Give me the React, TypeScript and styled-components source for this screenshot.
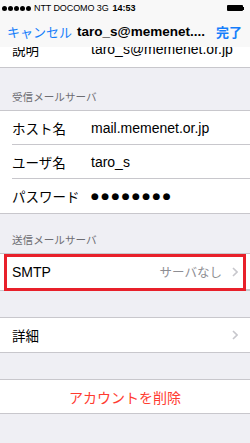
import React from "react";
import styled, { createGlobalStyle } from "styled-components";

const Global = createGlobalStyle`
  html, body { margin: 0; padding: 0; background: #efeff4; }
  body { font-family: "Liberation Sans", "Noto Sans CJK JP", sans-serif; -webkit-font-smoothing: antialiased; }
  * { box-sizing: border-box; }
`;

const Page = styled.div`
  position: relative;
  width: 250px;
  height: 443px;
  overflow: hidden;
  background: #efeff4;
`;

const Header = styled.div`
  position: absolute;
  top: 0;
  left: 0;
  right: 0;
  height: 47px;
  background: #f8f8f8;
  z-index: 2;
`;

const StatusBar = styled.div`
  height: 16px;
  display: grid;
  grid-template-columns: minmax(0, 1fr) auto minmax(0, 1fr);
  align-items: center;
  padding: 0 6px 0 2px;
  font-size: 9px;
  color: #000;
`;

const Carrier = styled.div`
  display: flex;
  align-items: center;
  gap: 3px;
  white-space: nowrap;
  letter-spacing: -0.1px;
`;

const Signal = styled.div`
  display: flex;
  gap: 1px;
`;

const Dot = styled.span`
  width: 5px;
  height: 5px;
  border-radius: 50%;
  background: #000;
`;

const Time = styled.div`
  font-weight: bold;
  padding-left: 2px;
`;

const BatteryWrap = styled.div`
  justify-self: end;
  display: flex;
  align-items: center;
`;

const BatteryBody = styled.div`
  width: 16px;
  height: 6px;
  border-radius: 1px;
  background: #000;
`;

const BatteryNub = styled.div`
  width: 1.5px;
  height: 3px;
  background: #000;
`;

const NavBar = styled.div`
  height: 31px;
  display: flex;
  align-items: center;
  padding: 0 8px 0 7px;
`;

const NavButton = styled.div<{ $bold?: boolean }>`
  color: #157efb;
  font-size: 13px;
  font-weight: ${(p) => (p.$bold ? "bold" : "normal")};
  white-space: nowrap;
`;

const NavTitle = styled.div`
  flex: 1;
  padding-left: 5px;
  font-size: 13.5px;
  font-weight: bold;
  color: #000;
  white-space: nowrap;
`;

const Content = styled.div`
  padding-top: 33px;
  display: flex;
  flex-direction: column;
`;

const Group = styled.div<{ $top?: boolean }>`
  position: relative;
  background: #fff;
  border-top: ${(p) => (p.$top === false ? "none" : "1px solid #c8c7cc")};
  border-bottom: 1px solid #c8c7cc;
`;

const SectionHeader = styled.div<{ $h: number }>`
  height: ${(p) => p.$h}px;
  display: flex;
  align-items: flex-end;
  padding: 0 12px 6px;
  font-size: 10.6px;
  line-height: 14px;
  color: #6d6d72;
`;

const Spacer = styled.div<{ $h: number }>`
  height: ${(p) => p.$h}px;
`;

const Row = styled.div<{ $h?: number }>`
  padding-left: 12px;
  height: ${(p) => p.$h ?? 34}px;
  &:not(:last-child) > div {
    border-bottom: 1px solid #c8c7cc;
  }
`;

const RowInner = styled.div<{ $center?: boolean; $lift?: number }>`
  height: 100%;
  display: flex;
  align-items: center;
  justify-content: ${(p) => (p.$center ? "center" : "flex-start")};
  padding-right: 12px;
  padding-bottom: ${(p) => p.$lift ?? 0}px;
  font-size: 14px;
  color: #000;
`;

const Label = styled.span`
  width: 79px;
  flex-shrink: 0;
  font-size: 13.5px;
  white-space: nowrap;
`;

const Value = styled.span`
  font-size: 14px;
  white-space: nowrap;
`;

const Dots = styled.span`
  font-family: "DejaVu Sans", sans-serif;
  font-size: 9px;
  letter-spacing: 2.4px;
`;

const Detail = styled.span`
  margin-left: auto;
  display: flex;
  align-items: center;
  gap: 10px;
  color: #8e8e93;
  font-size: 12.5px;
`;

const DangerText = styled.span`
  color: #ff3b30;
  font-size: 14px;
`;

const Highlight = styled.div`
  position: absolute;
  left: 4px;
  right: 4px;
  top: 0;
  height: 37px;
  border: 3px solid #e8202a;
  pointer-events: none;
`;

const Chevron = () => (
  <svg width="6" height="10" viewBox="0 0 6 10">
    <polyline points="1,1 5,5 1,9" fill="none" stroke="#c7c7cc" strokeWidth="1.6" />
  </svg>
);

export default function App() {
  return (
    <Page>
      <Global />
      <Header>
        <StatusBar>
          <Carrier>
            <Signal>
              {[0, 1, 2, 3, 4].map((i) => (
                <Dot key={i} />
              ))}
            </Signal>
            <span>NTT DOCOMO 3G</span>
          </Carrier>
          <Time>14:53</Time>
          <BatteryWrap>
            <BatteryBody />
            <BatteryNub />
          </BatteryWrap>
        </StatusBar>
        <NavBar>
          <NavButton>キャンセル</NavButton>
          <NavTitle>taro_s@memenet....</NavTitle>
          <NavButton $bold>完了</NavButton>
        </NavBar>
      </Header>
      <Content>
        <Group $top={false}>
          <Row>
            <RowInner $lift={3}>
              <Label>説明</Label>
              <Value>taro_s@memenet.or.jp</Value>
            </RowInner>
          </Row>
        </Group>
        <SectionHeader $h={42}>受信メールサーバ</SectionHeader>
        <Group>
          <Row>
            <RowInner>
              <Label>ホスト名</Label>
              <Value>mail.memenet.or.jp</Value>
            </RowInner>
          </Row>
          <Row>
            <RowInner>
              <Label>ユーザ名</Label>
              <Value>taro_s</Value>
            </RowInner>
          </Row>
          <Row>
            <RowInner>
              <Label>パスワード</Label>
              <Dots>●●●●●●●●</Dots>
            </RowInner>
          </Row>
        </Group>
        <SectionHeader $h={39}>送信メールサーバ</SectionHeader>
        <Group>
          <Row $h={36}>
            <RowInner>
              <Value>SMTP</Value>
              <Detail>
                サーバなし
                <Chevron />
              </Detail>
            </RowInner>
          </Row>
          <Highlight />
        </Group>
        <Spacer $h={26} />
        <Group>
          <Row>
            <RowInner>
              <Label>詳細</Label>
              <Detail>
                <Chevron />
              </Detail>
            </RowInner>
          </Row>
        </Group>
        <Spacer $h={26} />
        <Group>
          <Row $h={33}>
            <RowInner $center>
              <DangerText>アカウントを削除</DangerText>
            </RowInner>
          </Row>
        </Group>
      </Content>
    </Page>
  );
}
